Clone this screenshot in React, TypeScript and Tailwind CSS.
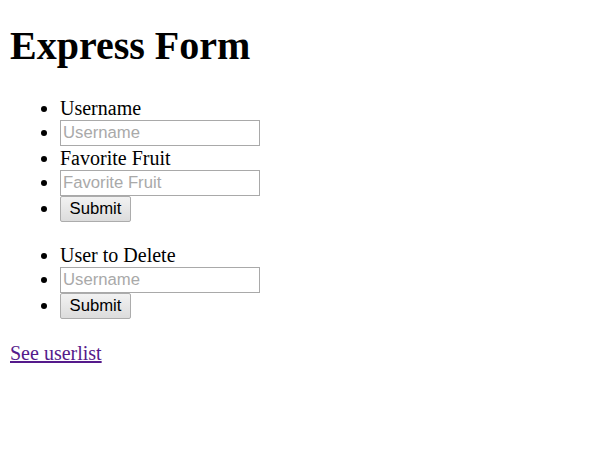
const fieldClass =
  "h-[26px] w-[200px] border border-[#a9a9a9] bg-white px-[2px] align-top font-['Liberation_Sans',Arial,sans-serif] text-[16.7px] text-black outline-none placeholder:text-[#a9a9a9]"

const buttonClass =
  "h-[26px] w-[71px] rounded-[2px] border border-[#acacac] bg-gradient-to-b from-[#f2f2f2] to-[#dcdcdc] align-top font-['Liberation_Sans',Arial,sans-serif] text-[16.7px] text-black"

export default function App() {
  return (
    <div className="min-h-[472px] bg-white px-[10px] pt-[23px] font-['Liberation_Serif','Times_New_Roman',serif] text-[20px] leading-[24px] text-black">
      <h1 className="text-[40px] font-bold leading-[46px]">Express Form</h1>

      <form className="mt-[27px]">
        <ul className="list-disc pl-[50px]">
          <li>Username</li>
          <li>
            <input className={fieldClass} placeholder="Username" />
          </li>
          <li>Favorite Fruit</li>
          <li>
            <input className={fieldClass} placeholder="Favorite Fruit" />
          </li>
          <li>
            <button type="button" className={buttonClass}>
              Submit
            </button>
          </li>
        </ul>
      </form>

      <form className="mt-[21px]">
        <ul className="list-disc pl-[50px]">
          <li>User to Delete</li>
          <li>
            <input className={fieldClass} placeholder="Username" />
          </li>
          <li>
            <button type="button" className={buttonClass}>
              Submit
            </button>
          </li>
        </ul>
      </form>

      <p className="mt-[22px]">
        <a href="#" className="text-[#551a8b] underline">
          See userlist
        </a>
      </p>
    </div>
  )
}
